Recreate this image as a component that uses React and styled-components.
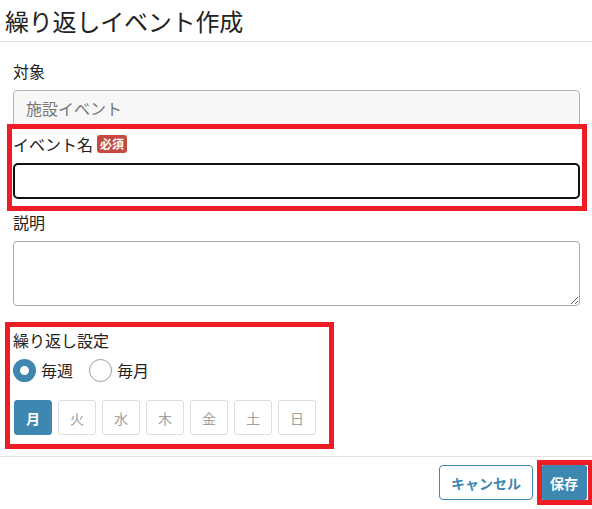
import styled, { createGlobalStyle } from 'styled-components';

const Global = createGlobalStyle`
	body {
		margin: 0;
		background: #ffffff;
		font-family: 'Noto Sans CJK JP', 'Noto Sans', sans-serif;
		color: #222222;
	}
`;

const days = ['月', '火', '水', '木', '金', '土', '日'];

export default function App() {
	return (
		<Dialog>
			<Global />
			<Header>
				<Title>繰り返しイベント作成</Title>
			</Header>

			<Body>
				<Field gap={6}>
					<Label>対象</Label>
					<TextInput disabled value="施設イベント" readOnly />
				</Field>

				<Field gap={11}>
					<Highlight top={-8} right={-7} bottom={-12} left={-6} />
					<Label>
						イベント名<Badge>必須</Badge>
					</Label>
					<TextInput focused />
				</Field>

				<Field gap={22}>
					<Label>説明</Label>
					<TextArea />
				</Field>

				<Field gap={0}>
					<Highlight top={-6} right={246} bottom={-14} left={-8} />
					<Label>繰り返し設定</Label>
					<RadioRow>
						<RadioItem>
							<RadioDot checked />
							毎週
						</RadioItem>
						<RadioItem>
							<RadioDot />
							毎月
						</RadioItem>
					</RadioRow>
					<DayRow>
						{days.map((d, i) => (
							<DayButton key={d} active={i === 0}>
								{d}
							</DayButton>
						))}
					</DayRow>
				</Field>
			</Body>

			<Footer>
				<CancelButton>キャンセル</CancelButton>
				<SaveWrap>
					<Highlight top={-5} right={-6} bottom={-5} left={-4} />
					<SaveButton>保存</SaveButton>
				</SaveWrap>
			</Footer>
		</Dialog>
	);
}

const Dialog = styled.div`
	width: 592px;
	height: 509px;
	overflow: hidden;
	display: flex;
	flex-direction: column;
`;

const Header = styled.div`
	height: 41px;
	border-bottom: 1px solid #e2e2e2;
	display: flex;
	align-items: center;
	padding-left: 5px;
`;

const Title = styled.h1`
	margin: 0;
	font-size: 24px;
	font-weight: 400;
	line-height: 30px;
	color: #222222;
	letter-spacing: -0.2px;
`;

const Body = styled.div`
	padding: 17px 12px 0 13px;
	display: flex;
	flex-direction: column;
`;

const Field = styled.div`
	position: relative;
	display: flex;
	flex-direction: column;
	margin-bottom: ${(props) => props.gap}px;
`;

const Highlight = styled.div`
	position: absolute;
	top: ${(props) => props.top}px;
	right: ${(props) => props.right}px;
	bottom: ${(props) => props.bottom}px;
	left: ${(props) => props.left}px;
	border: 5px solid #ee1c25;
	pointer-events: none;
	z-index: 2;
`;

const Label = styled.div`
	font-size: 16px;
	line-height: 24px;
	margin-bottom: 7px;
	display: flex;
	align-items: center;
`;

const Badge = styled.span`
	margin-left: 4px;
	background: #c4493e;
	color: #ffffff;
	font-size: 12px;
	font-weight: 700;
	line-height: 18px;
	padding: 0 3px;
	border-radius: 3px;
`;

const TextInput = styled.input`
	box-sizing: border-box;
	width: 100%;
	height: 36px;
	margin: 0;
	padding: 0 12px;
	font-family: inherit;
	font-size: 16px;
	border-radius: ${(props) => (props.focused ? '5px' : '4px')};
	border: ${(props) => (props.focused ? '2px solid #111111' : '1px solid #b4b4b4')};
	background: ${(props) => (props.disabled ? '#f7f7f7' : '#ffffff')};
	color: #777777;
	outline: none;
`;

const TextArea = styled.textarea`
	box-sizing: border-box;
	width: 100%;
	height: 65px;
	margin: 0;
	padding: 6px 12px;
	font-family: inherit;
	font-size: 16px;
	border: 1px solid #a9a9a9;
	border-radius: 4px;
	display: block;
`;

const RadioRow = styled.div`
	display: flex;
	gap: 16px;
	margin-top: -1px;
	margin-bottom: 18px;
`;

const RadioItem = styled.label`
	display: flex;
	align-items: center;
	gap: 5px;
	font-size: 16px;
	line-height: 24px;
`;

const RadioDot = styled.span`
	box-sizing: border-box;
	width: 23px;
	height: 23px;
	border-radius: 50%;
	background: #ffffff;
	border: ${(props) => (props.checked ? '7px solid #3d87b0' : '1px solid #9a9a9a')};
`;

const DayRow = styled.div`
	display: flex;
	gap: 6px;
	padding-left: 1px;
`;

const DayButton = styled.button`
	box-sizing: border-box;
	width: 38px;
	height: 35px;
	border-radius: 3px;
	font-family: inherit;
	font-size: 14px;
	font-weight: ${(props) => (props.active ? 700 : 400)};
	border: 1px solid ${(props) => (props.active ? '#3d87b0' : '#dddddd')};
	background: ${(props) => (props.active ? '#3d87b0' : '#ffffff')};
	color: ${(props) => (props.active ? '#ffffff' : '#a0a0a0')};
	padding: 0;
`;

const Footer = styled.div`
	margin-top: auto;
	height: 53px;
	box-sizing: border-box;
	border-top: 1px solid #e2e2e2;
	display: flex;
	justify-content: flex-end;
	align-items: flex-start;
	gap: 8px;
	padding: 8px 5px 0 0;
`;

const CancelButton = styled.button`
	box-sizing: border-box;
	height: 35px;
	padding: 0 11px;
	border: 1px solid #3d87b0;
	border-radius: 4px;
	background: #ffffff;
	color: #3d87b0;
	font-family: inherit;
	font-size: 14px;
	font-weight: 700;
`;

const SaveWrap = styled.div`
	position: relative;
`;

const SaveButton = styled.button`
	box-sizing: border-box;
	height: 35px;
	padding: 0 9px;
	border: none;
	border-radius: 3px;
	background: #3d87b0;
	color: #ffffff;
	font-family: inherit;
	font-size: 14px;
	font-weight: 700;
`;
